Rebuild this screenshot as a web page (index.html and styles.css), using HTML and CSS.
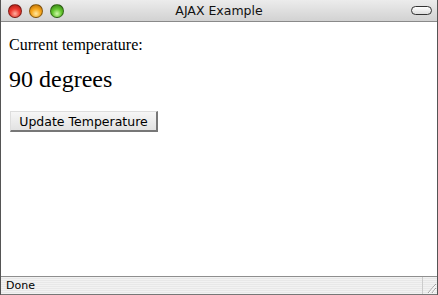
FILE: index.html
```html
<!DOCTYPE html>
<html>
<head>
<meta charset="utf-8">
<link rel="stylesheet" href="styles.css">
</head>
<body>
<div class="window">
  <div class="titlebar">
    <div class="lights">
      <span class="light red"></span>
      <span class="light yellow"></span>
      <span class="light green"></span>
    </div>
    <div class="title">AJAX Example</div>
    <span class="pill"></span>
  </div>
  <div class="content">
    <p class="label">Current temperature:</p>
    <p class="temp">90 degrees</p>
    <button class="update">Update Temperature</button>
  </div>
  <div class="statusbar">
    <span class="status">Done</span>
    <span class="grip">
      <svg width="14" height="17" viewBox="0 0 14 17">
        <path d="M13 7 L5 16 M13 11 L9 16" stroke="#999" stroke-width="1"/>
        <path d="M13 8 L6 16 M13 12 L10 16" stroke="#fff" stroke-width="1"/>
      </svg>
    </span>
  </div>
</div>
</body>
</html>
```

FILE: styles.css
```css
html, body {
  margin: 0;
  padding: 0;
  width: 438px;
  height: 295px;
  overflow: hidden;
  background: #fff;
}
.window {
  width: 438px;
  height: 295px;
  display: flex;
  flex-direction: column;
  box-sizing: border-box;
  border-left: 1px solid #555;
  border-right: 1px solid #555;
}
.titlebar {
  height: 22px;
  flex: none;
  display: flex;
  align-items: center;
  position: relative;
  background: linear-gradient(#ececec, #d2d2d2);
  border-bottom: 1px solid #8a8a8a;
  box-sizing: border-box;
}
.lights {
  display: flex;
  gap: 7px;
  padding-left: 7px;
}
.light {
  width: 14px;
  height: 14px;
  border-radius: 50%;
  box-sizing: border-box;
  border: 1px solid rgba(0,0,0,0.4);
}
.red { background: radial-gradient(circle at 50% 72%, #ffb0a0 0%, #ee3a30 45%, #a01810 100%); }
.yellow { background: radial-gradient(circle at 50% 72%, #ffe8a0 0%, #f7a81e 45%, #b06400 100%); }
.green { background: radial-gradient(circle at 50% 72%, #d0f8a8 0%, #62c52e 45%, #2e7410 100%); }
.title {
  position: absolute;
  left: 0;
  right: 0;
  top: 3px;
  text-align: center;
  font-family: "DejaVu Sans", sans-serif;
  font-size: 12.5px;
  color: #111;
}
.pill {
  margin-left: auto;
  margin-right: 5px;
  width: 21px;
  height: 9px;
  border: 1.5px solid #333;
  border-radius: 6px;
  background: linear-gradient(#fff, #ddd);
  box-sizing: border-box;
}
.content {
  flex: 1;
  padding: 8px 8px;
  font-family: "Liberation Serif", serif;
  color: #000;
}
.label {
  margin: 5px 0 0;
  font-size: 16px;
  line-height: 19px;
}
.temp {
  margin: 11px 0 0;
  font-size: 24px;
  line-height: 28px;
}
.update {
  margin-top: 18px;
  margin-left: 1px;
  width: 148px;
  height: 21px;
  padding: 0;
  font-family: "DejaVu Sans", sans-serif;
  font-size: 12.5px;
  color: #000;
  background: linear-gradient(#f6f6f6, #e2e2e2);
  border: none;
  border-top: 1px solid #ddd;
  border-left: 1px solid #ddd;
  border-right: 2px solid #777;
  border-bottom: 2px solid #777;
  box-sizing: border-box;
}
.statusbar {
  height: 19px;
  flex: none;
  display: flex;
  align-items: center;
  border-top: 1px solid #8e8e8e;
  border-bottom: 1px solid #777;
  background: repeating-linear-gradient(#f2f2f2 0 1px, #e8e8e8 1px 2px);
  box-sizing: border-box;
}
.status {
  padding-left: 5px;
  font-family: "DejaVu Sans", sans-serif;
  font-size: 11px;
  color: #000;
}
.grip {
  margin-left: auto;
  width: 14px;
  height: 17px;
  border-left: 1px solid #ccc;
  display: flex;
}
```
